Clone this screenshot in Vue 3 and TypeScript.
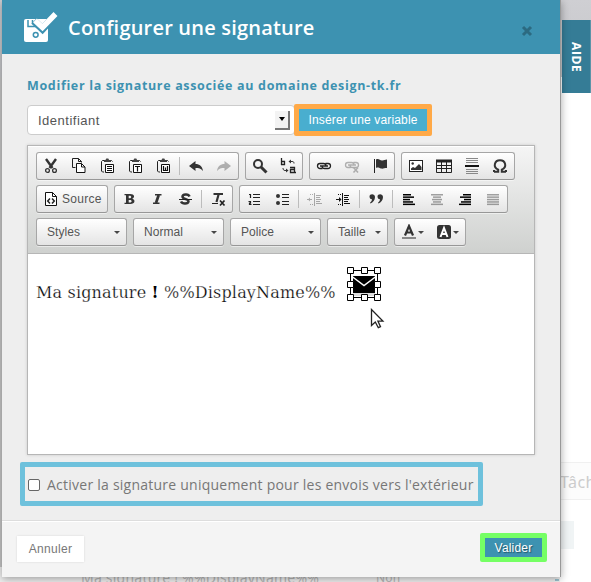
<script setup lang="ts">
import { ref } from 'vue'

type Tool = { icon?: string; off?: boolean; label?: string }

const useOutside = ref(false)

const clip = '<path d="M5 2.500H3.500L2.500 3.500V13l1 1H5M11 2.500H12.500L13.500 3.500" fill="none" stroke="#222"/><path d="M5 2h1.500l.8-1.500h2l.8 1.500H12v2H5z" fill="#444"/><path d="M6.500 6.500h8v8h-8z" fill="#fff" stroke="#111" stroke-width="1"/>'
const bars = (widths: number[][], color: string) =>
  widths.map(([x, w], i) => `<rect x="${x}" y="${3 + i * 2.4}" width="${w}" height="1.500" fill="${color}"/>`).join('')

const icons: Record<string, string> = {
  cut: '<path d="M3 1l6.500 9M13 1l-6.500 9" stroke="#333" stroke-width="2.400"/><circle cx="4.500" cy="12.500" r="1.900" fill="none" stroke="#333" stroke-width="1.300"/><circle cx="11.500" cy="12.500" r="1.900" fill="none" stroke="#333" stroke-width="1.300"/>',
  copy: '<path d="M4.500 9.500h-3v-9h6l3 3v1M7.500.5v3h3" fill="none" stroke="#222"/><path d="M5.500 5.500h5l3.500 3.500v5.500H5.500z" fill="#fff" stroke="#111"/><path d="M10.500 5.500v3.500H14" fill="none" stroke="#111"/>',
  paste: clip + '<path d="M8 8.500h5M8 10.500h5M8 12.500h5" stroke="#111"/>',
  pastetext: clip + '<path d="M8 8.500h5M10.500 8.500v5" stroke="#111" stroke-width="1.200"/>',
  pasteword: clip + '<path d="M8.500 8v4.500h4V8M10.500 9.500v3" fill="none" stroke="#111" stroke-width="1.200"/>',
  undo: '<path d="M1 8l6.500-5v3c4 0 7 2.500 7.500 7-2-2.500-4-3-7.500-3v3z" fill="#333"/>',
  redo: '<path d="M15 8L8.500 3v3c-4 0-7 2.500-7.500 7 2-2.500 4-3 7.500-3v3z" fill="#333"/>',
  find: '<circle cx="6" cy="6" r="4" fill="none" stroke="#333" stroke-width="2"/><path d="M9 9l5.500 5.500" stroke="#333" stroke-width="3"/>',
  replace: '<path d="M1.500 0v7M1.500 3.500h3v3H1M10 9.500h4.500v5M14.500 11.500h-4v3H16" fill="none" stroke="#222" stroke-width="1.300"/><path d="M9.500 3.500h2.500c1.500 0 2 .5 2 2M7 12.500H5c-1.500 0-2-1-2-2.500" fill="none" stroke="#333"/><path d="M11 1.500L8.500 3.500 11 5.500zM6 10.500l2.500 2-2.500 2z" fill="#333"/>',
  link: '<path d="M6.500 10.500H4a2.500 2.500 0 0 1 0-5h3.500a2.500 2.500 0 0 1 2.500 2.500M9.500 5.500H12a2.500 2.500 0 0 1 0 5H8.500A2.500 2.500 0 0 1 6 8M4 8h8" fill="none" stroke="#222" stroke-width="1.300"/>',
  unlink: '<path d="M6.500 9.500H4a2.500 2.500 0 0 1 0-5h3.500a2.500 2.500 0 0 1 2.500 2.500M9.500 4.500H12a2.500 2.500 0 0 1 0 5H8.500A2.500 2.500 0 0 1 6 7M4 7h8" fill="none" stroke="#333" stroke-width="1.300"/><path d="M9.500 9.500l4.500 5M14 9.500l-4.500 5" stroke="#333" stroke-width="1.500"/>',
  anchor: '<path d="M2.500 1v14" stroke="#222"/><path d="M4 1.500c3-1.500 4 1.500 6.500 1 1.500-.1 2.500-1 4.500-1V10c-3 0-4 1-6 .5S6 9 4 10z" fill="#333"/>',
  image: '<rect x="1.500" y="2.500" width="13" height="11" fill="#fff" stroke="#222"/><circle cx="4.700" cy="5.500" r="1.200" fill="#333"/><path d="M3 12v-1.500L5 9l2 1 4-4 2.500 3v3z" fill="#333"/>',
  table: '<path d="M.500 2.500h15v12H.500zM5.500 4v10M10.500 4v10M0 7.500h16M0 10.500h16" fill="none" stroke="#222"/><rect y="1.500" width="16" height="3" fill="#222"/>',
  rule: '<path d="M2 .5h12M2 2.500h12M2 4.500h12M2 11.500h12M2 13.500h12M2 15.500h12" stroke="#888"/><rect x="1" y="7" width="14" height="2" fill="#111"/>',
  omega: '<path d="M2 14v-2M14 14v-2M2 13.700h4.200v-2C.500 9 2.500 2.300 8 2.300s7.500 6.700 1.800 9.400v2H14" fill="none" stroke="#333" stroke-width="2"/>',
  source: '<path d="M2.500 1.500h7l4 4v9h-11z" fill="#fff" stroke="#111"/><path d="M9.500 1.500v4h4" fill="none" stroke="#111"/><path d="M7 7.500L4.700 10 7 12.500M9 7.500l2.300 2.500L9 12.500" fill="none" stroke="#222" stroke-width="1.500"/>',
  bold: '<path fill-rule="evenodd" d="M3.500 3H9c5 0 5 3.800 2.200 4.700C14.800 8.700 14 13 9.500 13h-6v-1.300H5V4.300H3.500zM7.700 4.700v2.500h1c2 0 2-2.500 0-2.500zM7.700 8.900v2.500H9c2.200 0 2.200-2.500 0-2.500z" fill="#333"/>',
  italic: '<path d="M6 3.700h6.500M4 12.300h6.500" stroke="#333" stroke-width="1.500"/><path d="M9.700 4L7 12" stroke="#333" stroke-width="2.700"/>',
  strike: '<path d="M12.500 5.500C11.500 2.500 5.500 3 5.500 5.700S12 8 11.500 10.500 5.500 13.500 4 10.500" fill="none" stroke="#333" stroke-width="2.500"/><path d="M2 8.500h13" stroke="#222"/>',
  removeformat: '<path d="M3.500 3h9.500M8.700 3L6.500 11" stroke="#333" stroke-width="2.200"/><path d="M2 12.500h6" stroke="#222"/><path d="M10 9.500l4.500 5M14.500 9.500l-4.500 5" stroke="#222" stroke-width="1.700"/>',
  numbers: '<path d="M3 3.500h1.500V7M2.500 10.500h2v1.700h-1v1.300h2" fill="none" stroke="#222" stroke-width="1.200"/><path d="M7 3.500h7M7 6.500h7M7 10.500h7M7 13.500h7" stroke="#222"/>',
  bullets: '<circle cx="4" cy="5" r="2" fill="#333"/><circle cx="4" cy="12" r="2" fill="#333"/><path d="M8 3.500h7M8 6.500h7M8 10.500h7M8 13.500h7" stroke="#222"/>',
  outdent: '<path d="M7.500 2v13M9 4.500h5M9 6.500h4M9 8.500h5M9 10.500h4M9 12.500h6M0 8.500h5" stroke="#222"/><path d="M3 3.500h3M3 13.500h3" stroke="#222" stroke-dasharray="1 1"/><path d="M3 6.500L1 8.500 3 10.500z" fill="#222"/>',
  indent: '<path d="M7.500 2v13M9 4.500h5M9 6.500h4M9 8.500h5M9 10.500h4M9 12.500h6M1 8.500h5" stroke="#111"/><path d="M3 3.500h3M3 13.500h3" stroke="#111" stroke-dasharray="1 1"/><path d="M4 6l2.500 2.500L4 11z" fill="#111"/>',
  quote: '<path d="M1.500 5.500c0-3 5.500-3 5.500.500 0 3-2 5.500-4.500 6.500l-.500-.700C3.500 10.500 4 9.500 4 8.300 2.500 8.500 1.500 7 1.500 5.500zM9.500 5.500c0-3 5.500-3 5.500.500 0 3-2 5.500-4.500 6.500l-.500-.700c1.500-1.300 2-2.300 2-3.500-1.500.2-2.500-1.300-2.500-2.800z" fill="#333"/>',
  left: bars([[2, 8], [2, 11], [2, 7], [2, 10], [2, 12]], '#000'),
  center: bars([[2, 12], [4, 8], [3, 10], [4, 8], [2, 12]], '#000'),
  right: bars([[6, 8], [3, 11], [7, 7], [4, 10], [2, 12]], '#000'),
  justify: bars([[2, 12], [2, 12], [2, 12], [2, 12], [2, 12]], '#000'),
  color: '<path d="M4 11.500l4-9.500 4 9.500M5.500 8.500h5" fill="none" stroke="#333" stroke-width="2.200"/><rect x="1" y="13" width="14" height="2" fill="#888"/>',
  bgcolor: '<rect x="1" y="1" width="14" height="14" rx="2.500" fill="#333"/><path d="M4.500 13L8 4l3.500 9M5.500 10h5" fill="none" stroke="#fff" stroke-width="2"/>',
}

const t = (...names: string[]): Tool[] =>
  names.map((n) => (n === '|' ? {} : n[0] === '-' ? { icon: n.slice(1), off: true } : { icon: n }))

const rows: Tool[][][] = [
  [t('cut', 'copy', 'paste', 'pastetext', 'pasteword', '|', 'undo', '-redo'), t('find', 'replace'), t('link', '-unlink', 'anchor'), t('image', 'table', 'rule', 'omega')],
  [[{ icon: 'source', label: 'Source' }], t('bold', 'italic', 'strike', '|', 'removeformat'), t('numbers', 'bullets', '|', '-outdent', 'indent', '|', 'quote', '|', 'left', '-center', 'right', '-justify')],
]
const combos = [
  { label: 'Styles' },
  { label: 'Normal' },
  { label: 'Police' },
  { label: 'Taille', small: true },
]
</script>

<template>
  <div class="page">
    <div class="backdrop-top"></div>
    <div class="task-row">Tâches</div>
    <div class="task-block"></div>
    <div class="under"><span>Ma signature ! %%DisplayName%%</span><span class="non">Non</span><i class="mark"></i></div>
    <div class="help">AIDE</div>

    <section class="modal">
      <header>
        <svg class="logo" width="34" height="32" viewBox="0 0 34 32">
          <path d="M2 7h22v21a2 2 0 0 1-2 2H2a2 2 0 0 1-2-2V9a2 2 0 0 1 2-2z" fill="#fff" />
          <path d="M4 8v6.500h10M8.500 8v4" fill="none" stroke="#3d92b1" stroke-width="1.500" />
          <circle cx="11.700" cy="22.800" r="2.400" fill="none" stroke="#3d92b1" stroke-width="1.500" />
          <path d="M10 9l8.500 8L31.500 3" fill="none" stroke="#3d92b1" stroke-width="7.500" />
          <path d="M11 8.500l7.500 7L31.500 2" fill="none" stroke="#fff" stroke-width="5.500" />
        </svg>
        <h1>Configurer une signature</h1>
        <svg class="close" width="12" height="12" viewBox="0 0 12 12"><path d="M2 2l8 8M10 2l-8 8" stroke="#2c6a81" stroke-width="3" /></svg>
      </header>

      <main>
        <h2>Modifier la signature associée au domaine design-tk.fr</h2>
        <div class="variable">
          <div class="select"><span>Identifiant</span><i></i></div>
          <button class="insert">Insérer une variable</button>
        </div>

        <div class="editor">
          <div class="toolbar">
            <div v-for="(row, r) in rows" :key="r" class="row">
              <div v-for="(group, g) in row" :key="g" class="group">
                <template v-for="(tool, i) in group" :key="i">
                  <span v-if="tool.icon" class="tool" :class="{ off: tool.off }">
                    <svg width="16" height="16" viewBox="0 0 16 16" v-html="icons[tool.icon]"></svg>
                    <span v-if="tool.label" class="label">{{ tool.label }}</span>
                  </span>
                  <span v-else class="sep"></span>
                </template>
              </div>
            </div>
            <div class="row">
              <div v-for="c in combos" :key="c.label" class="group combo" :class="{ small: c.small }">
                <span>{{ c.label }}</span><i class="arrow"></i>
              </div>
              <div class="group colors">
                <span v-for="n in ['color', 'bgcolor']" :key="n" class="swatch">
                  <svg width="16" height="16" viewBox="0 0 16 16" v-html="icons[n]"></svg><i class="arrow"></i>
                </span>
              </div>
            </div>
          </div>
          <div class="content">
            <span class="text">Ma signature <b>!</b> %%DisplayName%%</span>
            <svg class="mail" width="36" height="36" viewBox="0 0 36 36">
              <path d="M7 27h22v3H7z" fill="#ddd" />
              <path d="M7 10h22v17H7z" fill="#000" />
              <path d="M6 10.500l12 9 12-9" fill="none" stroke="#fff" stroke-width="1.500" />
              <path d="M4.500 4.500h27v27h-27z" fill="none" stroke="#000" />
              <g fill="#fff" stroke="#000">
                <path d="M1.500 1.500h6v6h-6zM15.500 1.500h6v6h-6zM28.500 1.500h6v6h-6zM1.500 15.500h6v6h-6zM28.500 15.500h6v6h-6zM1.500 28.500h6v6h-6zM15.500 28.500h6v6h-6zM28.500 28.500h6v6h-6z" />
              </g>
            </svg>
            <svg class="cursor" width="16" height="22" viewBox="0 0 16 22">
              <path d="M1.500 1.500v16l3.800-3.500 3 5.700 2.200-1-2.600-5.600h5z" fill="#fff" stroke="#222" stroke-width="1.300" />
            </svg>
          </div>
        </div>

        <label class="outside">
          <input v-model="useOutside" type="checkbox" />
          <span>Activer la signature uniquement pour les envois vers l'extérieur</span>
        </label>
      </main>

      <footer>
        <button class="cancel">Annuler</button>
        <button class="ok">Valider</button>
      </footer>
    </section>
  </div>
</template>

<style>
body { overflow: hidden; background: #fff; }
</style>

<style scoped>
* { box-sizing: border-box; }
.page { position: relative; width: 591px; height: 582px; overflow: hidden; padding-left: 2px; background: linear-gradient(90deg, #c6c6c6 0 2px, #fff 2px); font-family: "Open Sans", sans-serif; }
.backdrop-top { position: absolute; inset: 0 0 auto 0; height: 77px; background: linear-gradient(#cfcfd3, #c5c6c9); }
.task-row { position: absolute; left: 560px; top: 462px; width: 40px; height: 38px; border: solid #f0f0f0; border-width: 1px 0; background: #fcfcfc; color: #ccc; font: 16px/38px "Noto Sans", sans-serif; letter-spacing: .4px; }
.task-block { position: absolute; left: 560px; top: 521px; width: 14px; height: 28px; background: #f0f4f5; }
.under { position: absolute; left: 0; top: 567px; width: 560px; height: 15px; padding-left: 81px; display: flex; overflow: hidden; color: #b8b8b8; font: 14px/22px "Noto Sans", sans-serif; background: #f0f0f0; }
.under span { flex: none; width: 238px; white-space: nowrap; letter-spacing: .22px; }
.under .non { width: auto; margin-left: 57px; font-size: 12px; }
.mark { width: 4px; height: 15px; margin-left: auto; margin-right: 1px; background: repeating-linear-gradient(#9cc3d1 0 2px, #f0f0f0 2px 4px); }
.help { position: absolute; left: 562px; top: 20px; width: 29px; height: 73px; background: #357c96; border-right: 1px solid #5b94a8; color: #fff; writing-mode: vertical-rl; font-size: 12px; font-weight: 700; line-height: 28px; padding-top: 22px; letter-spacing: .6px; }
.modal { position: relative; display: flex; flex-direction: column; width: 559px; height: 577px; background: #eee; border-right: 1px solid #999; box-shadow: 0 2px 8px rgba(0, 0, 0, .35); }
header { display: flex; align-items: flex-start; height: 54px; padding: 12px 27px 0 22px; background: #3d92b1; }
h1 { margin: 2px auto 0 10px; color: #fff; font-size: 20px; font-weight: 600; line-height: 28px; letter-spacing: .2px; white-space: nowrap; }
.close { margin-top: 13px; }
main { height: 466px; padding: 21px 25px 0; }
h2 { margin: 0; color: #3d92b1; font-size: 12.5px; font-weight: 700; line-height: 21px; letter-spacing: .66px; white-space: nowrap; }
.variable { display: flex; margin-top: 8px; height: 32px; }
.select { display: flex; align-items: center; justify-content: space-between; width: 268px; height: 30px; margin-top: 1px; padding: 0 4px 0 10px; border: 1px solid #ccc; border-radius: 4px; background: #fff; font: 13px "Liberation Sans", sans-serif; letter-spacing: .5px; color: #555; }
.select i { display: flex; align-items: center; justify-content: center; width: 15px; height: 19px; border: solid #777; border-width: 0 2px 2px 0; background: #f3f3f3; }
.select i::after { content: ''; border: 3px solid transparent; border-top: 4px solid #000; border-bottom: 0; }
button { padding: 0; border: 0; font: 12px "Liberation Sans", sans-serif; white-space: nowrap; }
.insert { width: 138px; height: 32px; margin-left: -1px; border: 5px solid #ffa947; border-radius: 2px; background: #49aecf; color: #fff; letter-spacing: .15px; }
.editor { width: 508px; height: 310px; margin-top: 9px; border: 1px solid #b6b6b6; background: #fff; box-shadow: 0 0 3px rgba(0, 0, 0, .15); }
.toolbar { display: flex; flex-direction: column; gap: 5px; height: 108px; padding: 6px 8px; border-bottom: 1px solid #b6b6b6; background: linear-gradient(#f5f5f5, #cfd1cf); box-shadow: inset 0 1px #fff; }
.row { display: flex; gap: 6px; height: 28px; }
.group { display: flex; border: 1px solid #a6a6a6; border-bottom-color: #979797; border-radius: 3px; background: linear-gradient(#fff, #e4e4e4); box-shadow: 0 1px rgba(255, 255, 255, .5); color: #555; font: 12px/26px "Liberation Sans", sans-serif; letter-spacing: .05px; }
.tool { display: flex; align-items: center; height: 26px; padding: 0 6px; }
.off svg { opacity: .35; }
.label { width: 42px; padding-left: 3px; letter-spacing: .3px; white-space: nowrap; }
.sep { width: 1px; height: 18px; margin: 4px 2px; background: #bcbcbc; }
.combo { align-items: center; justify-content: space-between; width: 91px; padding: 0 6px 0 10px; }
.combo.small { width: 61px; }
.arrow { width: 0; border: 3px solid transparent; border-top-color: #474747; border-bottom: 0; }
.colors { width: 72px; }
.swatch { display: flex; align-items: center; gap: 1px; width: 35px; padding-left: 6px; }
.content { position: relative; height: 200px; padding: 26px 8px; color: #000; font: 16px/26px "DejaVu Serif", serif; letter-spacing: .17px; white-space: nowrap; }
.text { -webkit-text-stroke: .25px #fff; }
.text b { -webkit-text-stroke: 0; }
.mail { position: absolute; left: 318px; top: 12px; }
.cursor { position: absolute; left: 342px; top: 54px; }
.outside { display: flex; align-items: center; width: 463px; height: 44px; margin: 7px 0 0 -7px; padding-left: 3px; border: 5px solid #6ec1dc; border-radius: 2px; color: #777; font-size: 14px; letter-spacing: .24px; white-space: nowrap; }
input { flex: none; width: 12px; height: 12px; margin: 2px 7px 0 0; border: 1px solid #666; border-radius: 2px; background: #fff; appearance: none; }
footer { display: flex; flex: 1; align-items: flex-start; justify-content: space-between; padding: 12px 13px 0 15px; border-top: 1px solid #ddd; background: #f4f4f4; box-shadow: inset 0 1px #fff; }
.cancel { width: 67px; height: 26px; margin-top: 3px; background: #fff; color: #777; letter-spacing: .3px; box-shadow: 0 0 2px rgba(0, 0, 0, .12); }
.ok { width: 67px; height: 29px; border: 5px solid #75ff64; border-radius: 2px; background: #3d92b1; color: #fff; letter-spacing: .2px; text-shadow: 1px 1px 1px #256; }
</style>
